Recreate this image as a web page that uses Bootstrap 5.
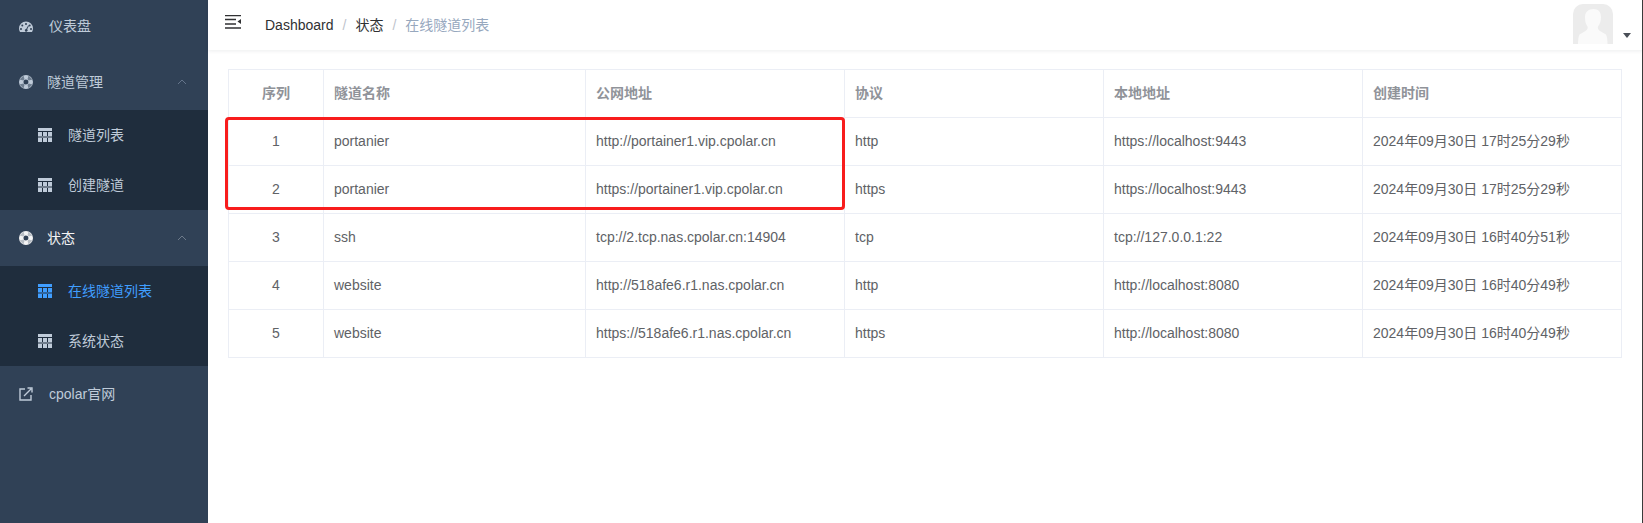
<!DOCTYPE html>
<html lang="zh-CN">
<head>
    <meta charset="UTF-8">
    <meta name="viewport" content="width=device-width, initial-scale=1.0">
    <title>cpolar</title>
    <link href="https://cdn.jsdelivr.net/npm/bootstrap@5.3.0/dist/css/bootstrap.min.css" rel="stylesheet">
    <style>
        html, body { height: 100%; overflow: hidden; }
        body {
            font-family: "Liberation Sans", "Noto Sans CJK SC", sans-serif;
            font-size: 14px;
            color: #606266;
            border-right: 1px solid #3a3a3a;
        }
        .side-bar { width: 208px; background: #304156; color: #bfcbd9; flex: none; }
        .side-item { height: 56px; padding-left: 19px; }
        .side-item.first-item { height: 55px; margin-top: -1px; }
        .side-item .ico { width: 14px; height: 14px; fill: currentColor; flex: none; }
        .side-item .lbl { margin-left: 16px; }
        .side-item.group-open .lbl { margin-left: 14px; }
        .side-item.group-open .chev { margin-left: auto; margin-right: 21px; width: 10px; height: 6px; }
        .group-lit { color: #f4f4f5; }
        .group-lit .chev { color: #6d7a8a; }
        .chev { color: #64748a; }
        .sub-menu { background: #1f2d3d; }
        .sub-item { height: 50px; padding-left: 38px; }
        .sub-item svg { width: 14px; height: 14px; fill: currentColor; flex: none; }
        .sub-item span { margin-left: 16px; }
        .sub-item.on { color: #409eff; }
        .top-bar { height: 50px; box-shadow: 0 1px 4px rgba(0, 21, 41, .08); padding-left: 17px; }
        .burger { width: 16px; height: 14px; margin-top: -6px; }
        .breadcrumb { margin: 0 0 0 24px; font-size: 14px; --bs-breadcrumb-divider-color: #c0c4cc; --bs-breadcrumb-item-active-color: #97a8be; --bs-breadcrumb-item-padding-x: 9px; }
        .breadcrumb-item { color: #303133; }
        .face-box { width: 40px; height: 40px; border-radius: 10px 10px 0 0; background: #ececec; overflow: hidden; margin-top: 4px; }
        .face-box svg { display: block; width: 40px; height: 40px; }
        .face-caret { width: 0; height: 0; border: 4px solid transparent; border-top: 5px solid #4a4f57; border-bottom: 0; margin: 33px 12px 0 10px; }
        .tunnel-wrap { padding: 19px 21px 0 20px; position: relative; }
        .tunnel-table { table-layout: fixed; margin: 0; --bs-table-border-color: #ebeef5; color: #606266; --bs-table-color: #606266; }
        .tunnel-table th, .tunnel-table td { height: 48px; padding: 0 10px; vertical-align: middle; font-size: 14px; line-height: 23px; }
        .tunnel-table th { color: #909399; font-weight: 700; }
        .red-box { position: absolute; left: 17px; top: 67px; width: 620px; height: 93px; border: 3px solid #f81d1d; border-radius: 4px; pointer-events: none; }
    </style>
</head>
<body>
    <div class="d-flex h-100">
        <!-- sidebar -->
        <div class="side-bar">
            <div class="side-item first-item d-flex align-items-center">
                <svg class="ico" viewBox="0 0 14 14"><path fill-rule="evenodd" d="M7 1.5A7 7 0 0 0 0 8.5c0 1.3.3 2.4 1 3.5h12c.7-1.1 1-2.2 1-3.5a7 7 0 0 0-7-7zM7 3a1 1 0 1 1 0 2 1 1 0 0 1 0-2zM3.3 4.6a1 1 0 1 1 0 2 1 1 0 0 1 0-2zm7.4 0a1 1 0 1 1 0 2 1 1 0 0 1 0-2zM2 8a1 1 0 1 1 0 2 1 1 0 0 1 0-2zm10 0a1 1 0 1 1 0 2 1 1 0 0 1 0-2zM9.300 5.200l.8.4L8.200 9.300a1.400 1.400 0 1 1-1-.4z"/></svg>
                <span class="lbl">仪表盘</span>
            </div>
            <div class="side-item group-open d-flex align-items-center">
                <svg class="ico" viewBox="0 0 14 14"><path fill-rule="evenodd" d="M7 0a7 7 0 1 1 0 14A7 7 0 0 1 7 0zm0 4.500a2.500 2.500 0 1 0 0 5 2.500 2.500 0 0 0 0-5z"/><path fill="#304156" d="M4.500 .5 5.500 4.300 4.300 5.500.5 4.500zm5 0 .0 0L13.500 4.500 9.700 5.500 8.500 4.300zM.5 9.500l3.800-1 1.200 1.200-1 3.800zm13 0-3.800-1-1.200 1.200 1 3.800z" opacity=".55"/></svg>
                <span class="lbl">隧道管理</span>
                <svg class="chev" viewBox="0 0 10 6"><path d="M1 5l4-4 4 4" fill="none" stroke="currentColor"/></svg>
            </div>
            <div class="sub-menu">
                <div class="sub-item d-flex align-items-center">
                    <svg viewBox="0 0 14 14"><path fill-rule="evenodd" d="M0 0h14v14H0zM0 3h14v1H0zM4 4h1v10H4zM9 4h1v10H9zM0 8.500h14v1H0z"/></svg>
                    <span>隧道列表</span>
                </div>
                <div class="sub-item d-flex align-items-center">
                    <svg viewBox="0 0 14 14"><path fill-rule="evenodd" d="M0 0h14v14H0zM0 3h14v1H0zM4 4h1v10H4zM9 4h1v10H9zM0 8.500h14v1H0z"/></svg>
                    <span>创建隧道</span>
                </div>
            </div>
            <div class="side-item group-open group-lit d-flex align-items-center">
                <svg class="ico" viewBox="0 0 14 14"><path fill-rule="evenodd" d="M7 0a7 7 0 1 1 0 14A7 7 0 0 1 7 0zm0 4.500a2.500 2.500 0 1 0 0 5 2.500 2.500 0 0 0 0-5z"/><path fill="#304156" d="M4.500 .5 5.500 4.300 4.300 5.500.5 4.500zM13.500 4.500 9.700 5.500 8.500 4.300 9.500 .5zM.5 9.500l3.800-1 1.200 1.200-1 3.800zm13 0-3.800-1-1.200 1.200 1 3.800z" opacity=".3"/></svg>
                <span class="lbl">状态</span>
                <svg class="chev" viewBox="0 0 10 6"><path d="M1 5l4-4 4 4" fill="none" stroke="currentColor"/></svg>
            </div>
            <div class="sub-menu">
                <div class="sub-item on d-flex align-items-center">
                    <svg viewBox="0 0 14 14"><path fill-rule="evenodd" d="M0 0h14v14H0zM0 3h14v1H0zM4 4h1v10H4zM9 4h1v10H9zM0 8.500h14v1H0z"/></svg>
                    <span>在线隧道列表</span>
                </div>
                <div class="sub-item d-flex align-items-center">
                    <svg viewBox="0 0 14 14"><path fill-rule="evenodd" d="M0 0h14v14H0zM0 3h14v1H0zM4 4h1v10H4zM9 4h1v10H9zM0 8.500h14v1H0z"/></svg>
                    <span>系统状态</span>
                </div>
            </div>
            <div class="side-item d-flex align-items-center">
                <svg class="ico" viewBox="0 0 14 14"><path d="M6 2H1v11h11V8" fill="none" stroke="currentColor" stroke-width="1.400"/><path d="M5 9l7-7M8.500 1H13v4.500" fill="none" stroke="currentColor" stroke-width="1.400"/></svg>
                <span class="lbl">cpolar官网</span>
            </div>
        </div>

        <!-- main -->
        <div class="flex-grow-1">
            <div class="top-bar d-flex align-items-center">
                <svg class="burger" viewBox="0 0 16 14"><path d="M0 .5h16M0 4.500h11M0 9h11M0 13h16" stroke="#303133" stroke-width="1.500" fill="none"/><path d="M16 4v5l-3.500-2.500z" fill="#303133"/></svg>
                <ol class="breadcrumb">
                    <li class="breadcrumb-item">Dashboard</li>
                    <li class="breadcrumb-item">状态</li>
                    <li class="breadcrumb-item active">在线隧道列表</li>
                </ol>
                <div class="ms-auto d-flex align-self-start">
                    <div class="face-box">
                        <svg viewBox="0 0 40 40"><path fill="#fafafa" d="M12 13c0-5 3.500-8 8.500-8s7.500 3 7.500 8c0 4-1 7-3 9.500-.5 1.500 0 3 2 4.500l6 3.500c1 2 1.500 5 1.500 9.500H5c0-4.500.5-7.500 1.500-9.500l6-3.500c2-1.500 2.500-3 2-4.500-2-2.500-2.500-5.500-2.500-9.500z"/></svg>
                    </div>
                    <div class="face-caret"></div>
                </div>
            </div>
            <div class="tunnel-wrap">
                <table class="table table-bordered tunnel-table">
                    <colgroup>
                        <col style="width:95px"><col style="width:262px"><col style="width:259px">
                        <col style="width:259px"><col style="width:259px"><col style="width:259px">
                    </colgroup>
                    <thead>
                        <tr><th class="text-center">序列</th><th>隧道名称</th><th>公网地址</th><th>协议</th><th>本地地址</th><th>创建时间</th></tr>
                    </thead>
                    <tbody>
                        <tr><td class="text-center">1</td><td>portanier</td><td>http://portainer1.vip.cpolar.cn</td><td>http</td><td>https://localhost:9443</td><td>2024年09月30日 17时25分29秒</td></tr>
                        <tr><td class="text-center">2</td><td>portanier</td><td>https://portainer1.vip.cpolar.cn</td><td>https</td><td>https://localhost:9443</td><td>2024年09月30日 17时25分29秒</td></tr>
                        <tr><td class="text-center">3</td><td>ssh</td><td>tcp://2.tcp.nas.cpolar.cn:14904</td><td>tcp</td><td>tcp://127.0.0.1:22</td><td>2024年09月30日 16时40分51秒</td></tr>
                        <tr><td class="text-center">4</td><td>website</td><td>http://518afe6.r1.nas.cpolar.cn</td><td>http</td><td>http://localhost:8080</td><td>2024年09月30日 16时40分49秒</td></tr>
                        <tr><td class="text-center">5</td><td>website</td><td>https://518afe6.r1.nas.cpolar.cn</td><td>https</td><td>http://localhost:8080</td><td>2024年09月30日 16时40分49秒</td></tr>
                    </tbody>
                </table>
                <div class="red-box"></div>
            </div>
        </div>
    </div>
    <script src="https://cdn.jsdelivr.net/npm/bootstrap@5.3.0/dist/js/bootstrap.bundle.min.js"></script>
</body>
</html>
